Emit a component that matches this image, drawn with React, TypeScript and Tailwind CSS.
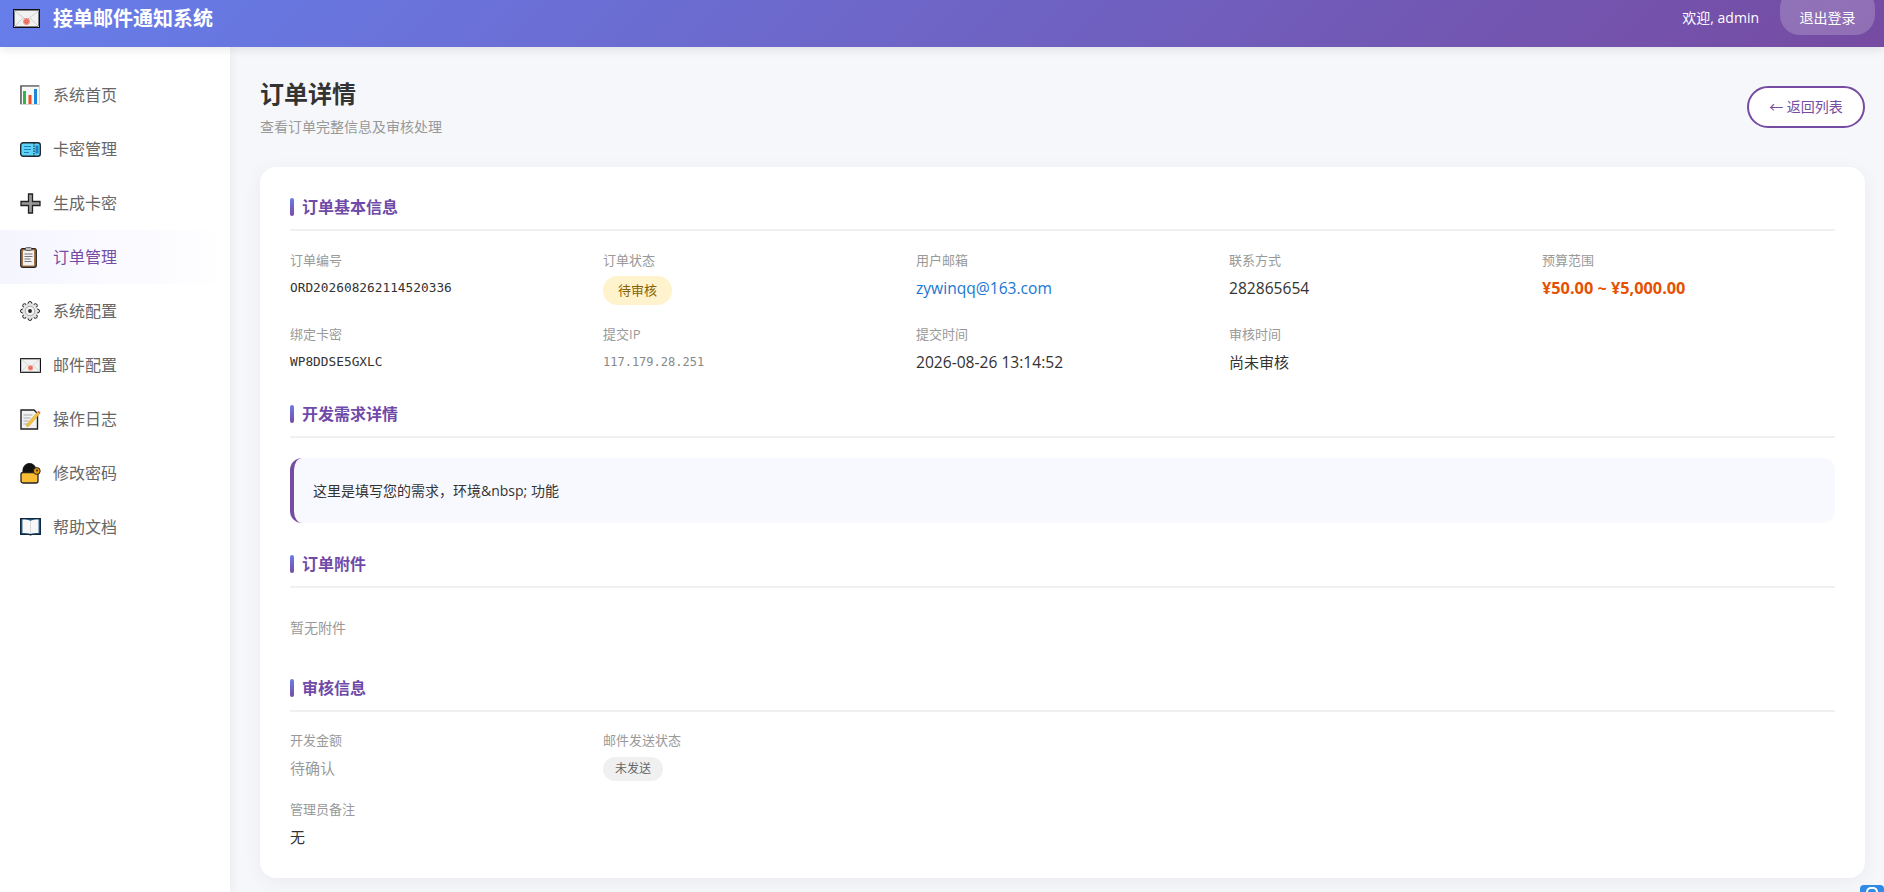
import React from "react";

const Envelope = ({ w, h }: { w: number; h: number }) => (
  <svg width={w} height={h} viewBox="0 0 27 19">
    <rect x="0.75" y="0.75" width="25.5" height="17.5" fill="#f1f1f1" stroke="#111" strokeWidth="1.5" />
    <path d="M1 1.5 13.5 11 26 1.5M1 18l9-9M26 18l-9-9" fill="none" stroke="#cfcfcf" strokeWidth="1" />
    <circle cx="13.5" cy="12.5" r="3.4" fill="#f0907c" />
    <circle cx="13.5" cy="12.5" r="1.5" fill="none" stroke="#d8432c" strokeWidth="0.8" />
  </svg>
);

const Chart = () => (
  <svg width="20" height="20" viewBox="0 0 20 20">
    <rect x="0.5" y="0.5" width="19" height="19" fill="#f8f8f8" stroke="#d5d5d5" />
    <path d="M1 19V1h18" fill="none" stroke="#333" strokeWidth="1.2" />
    <rect x="3" y="6" width="3" height="13" fill="#33b54a" />
    <rect x="8.5" y="10" width="3" height="9" fill="#f04e23" />
    <rect x="14" y="4" width="3" height="15" fill="#1c86dd" />
  </svg>
);

const Ticket = () => (
  <svg width="21" height="15" viewBox="0 0 21 15">
    <rect x="0.7" y="0.7" width="19.6" height="13.6" rx="2.5" fill="#5fd4f7" stroke="#1e2a33" strokeWidth="1.4" />
    <path d="M14 1v13" stroke="#111" strokeWidth="1" strokeDasharray="1.5 1" />
    <path d="M4 4.5h7M4 7.5h7M4 10.5h5" stroke="#1b80c4" strokeWidth="1" />
    <rect x="15.5" y="3.5" width="3" height="8" fill="#1b80c4" />
  </svg>
);

const Plus = () => (
  <svg width="21" height="21" viewBox="0 0 21 21">
    <path d="M8.5 1h4v7.5H20v4h-7.500V20h-4v-7.500H1v-4h7.500z" fill="#9a9a9a" stroke="#222" strokeWidth="1.3" />
  </svg>
);

const Clipboard = () => (
  <svg width="17" height="21" viewBox="0 0 17 21">
    <rect x="0.7" y="1.7" width="15.600" height="18.600" rx="2" fill="#a5754a" stroke="#222" strokeWidth="1.2" />
    <rect x="3" y="3.500" width="11" height="15" fill="#f2f2f2" />
    <rect x="5.500" y="0.500" width="6" height="3" rx="1" fill="#bbb" stroke="#444" strokeWidth="0.7" />
    <path d="M4.500 7h8M4.500 9.500h8M4.500 12h6M4.500 14.500h7" stroke="#777" strokeWidth="1" />
  </svg>
);

const Gear = () => (
  <svg width="20" height="20" viewBox="0 0 20 20">
    <g fill="#e4e4e4" stroke="#222" strokeWidth="1">
      <circle cx="10" cy="2.400" r="1.900" />
      <circle cx="15.400" cy="4.600" r="1.900" />
      <circle cx="17.600" cy="10" r="1.900" />
      <circle cx="15.400" cy="15.400" r="1.900" />
      <circle cx="10" cy="17.600" r="1.900" />
      <circle cx="4.600" cy="15.400" r="1.900" />
      <circle cx="2.400" cy="10" r="1.900" />
      <circle cx="4.600" cy="4.600" r="1.900" />
    </g>
    <circle cx="10" cy="10" r="7.400" fill="#e4e4e4" />
    <circle cx="10" cy="10" r="4.800" fill="#f2f2f2" stroke="#999" strokeWidth="0.800" />
    <circle cx="10" cy="10" r="1.900" fill="#222" />
  </svg>
);

const Memo = () => (
  <svg width="21" height="21" viewBox="0 0 21 21">
    <path d="M1 1h13l3.500 3.500V20H1z" fill="#f2f2f2" stroke="#222" strokeWidth="1.400" />
    <path d="M3.500 6h9M3.500 9h7M3.500 12h5M3.500 15h4" stroke="#aaa" strokeWidth="1" />
    <path d="M7 15 18 2.500l2 1.800L9 17l-2.500.5z" fill="#f4c542" stroke="#d89c20" strokeWidth="0.600" />
    <path d="M17.500 3l1-1.300 2 1.800-1 1.200z" fill="#d66a6a" />
  </svg>
);

const Lock = () => (
  <svg width="21" height="21" viewBox="0 0 21 21">
    <path d="M3 11V7a6.500 6.500 0 0 1 13 0v4z" fill="#111" stroke="#111" strokeWidth="1" />
    <rect x="1" y="9.500" width="17" height="10.500" rx="2" fill="#fbbc35" stroke="#222" strokeWidth="1.300" />
    <circle cx="16.800" cy="8" r="3.400" fill="#e59a0c" stroke="#222" strokeWidth="1" />
    <circle cx="17" cy="7.500" r="0.900" fill="#222" />
  </svg>
);

const Book = () => (
  <svg width="21" height="18" viewBox="0 0 21 18">
    <rect x="0.700" y="0.700" width="19.600" height="15.600" fill="#2b6ea8" stroke="#14263a" strokeWidth="1.400" />
    <path d="M2.500 1.500c3 0 6.500 0 8 1.500 1.500-1.500 5-1.500 8-1.500v13.500c-3 0-6.500 0-8 1-1.500-1-5-1-8-1z" fill="#f7f7f7" />
    <path d="M10.500 3v13" stroke="#cfcfcf" strokeWidth="0.800" />
    <path d="M9.500 16.500h2v1h-2z" fill="#14263a" />
  </svg>
);

const navItems: { label: string; icon: React.ReactNode; active?: boolean }[] = [
  { label: "系统首页", icon: <Chart /> },
  { label: "卡密管理", icon: <Ticket /> },
  { label: "生成卡密", icon: <Plus /> },
  { label: "订单管理", icon: <Clipboard />, active: true },
  { label: "系统配置", icon: <Gear /> },
  { label: "邮件配置", icon: <Envelope w={21} h={15} /> },
  { label: "操作日志", icon: <Memo /> },
  { label: "修改密码", icon: <Lock /> },
  { label: "帮助文档", icon: <Book /> },
];

const SectionTitle = ({ children }: { children: React.ReactNode }) => (
  <div className="flex h-[48px] items-center gap-2 border-b-2 border-[#f0f0f0] pt-[2px] text-[16px] font-bold text-[#6f4aa8]">
    <span className="h-[18px] w-[4px] rounded-[2px] bg-gradient-to-b from-[#667eea] to-[#764ba2]" />
    {children}
  </div>
);

const Field = ({ label, children }: { label: string; children: React.ReactNode }) => (
  <div className="flex h-[62px] flex-col">
    <div className="h-[26px] text-[13px] leading-[26px] text-[#999]">{label}</div>
    <div className="flex h-[30px] items-center text-[15px] leading-[30px] text-[#333]">{children}</div>
  </div>
);

const mono = "font-['DejaVu_Sans_Mono',monospace] text-[12.800px] text-[#333]";

export default function App() {
  return (
    <div className="relative flex h-[892px] flex-col overflow-hidden bg-[#f5f7fa] font-['Open_Sans','Noto_Sans_CJK_SC',sans-serif]">
      <header className="z-20 flex h-[47px] shrink-0 items-start justify-between bg-[linear-gradient(135deg,#667eea,#764ba2)] pl-[13px] pr-[9px] shadow-[0_2px_10px_rgba(0,0,0,0.1)]">
        <div className="flex h-[37px] items-center gap-[13px]">
          <Envelope w={27} h={19} />
          <span className="text-[20px] font-bold leading-[28px] text-white">接单邮件通知系统</span>
        </div>
        <div className="flex items-start gap-[21px]">
          <span className="text-[14px] leading-[36px] text-white">欢迎, admin</span>
          <button className="mt-[-12px] h-[47px] w-[95px] rounded-[20px] bg-white/20 pt-[12px] text-[14px] text-white">
            退出登录
          </button>
        </div>
      </header>
      <div className="flex min-h-0 flex-1">
        <aside className="z-10 w-[230px] shrink-0 bg-white pt-[21px] shadow-[2px_0_10px_rgba(0,0,0,0.05)]">
          {navItems.map((item) => (
            <div
              key={item.label}
              className={
                item.active
                  ? "flex h-[54px] items-center bg-gradient-to-r from-[#f5f5ff] to-white pl-[20px] text-[16px] text-[#764ba2]"
                  : "flex h-[54px] items-center pl-[20px] text-[16px] text-[#666]"
              }
            >
              <span className="flex w-[33px] shrink-0 items-center">{item.icon}</span>
              {item.label}
            </div>
          ))}
        </aside>
        <main className="min-w-0 flex-1 pl-[30px] pr-[19px]">
          <div className="flex h-[120px] items-center justify-between pb-[1px]">
            <div>
              <h1 className="text-[24px] font-bold leading-[34px] text-[#333]">订单详情</h1>
              <p className="mt-[6px] text-[14px] leading-[20px] text-[#999]">查看订单完整信息及审核处理</p>
            </div>
            <button className="h-[42px] w-[118px] rounded-[21px] border-2 border-[#764ba2] bg-white text-[14px] text-[#764ba2]">
              ← 返回列表
            </button>
          </div>
          <section className="h-[711px] rounded-[16px] bg-white px-[30px] pt-[16px] shadow-[0_4px_20px_rgba(0,0,0,0.05)]">
            <SectionTitle>订单基本信息</SectionTitle>
            <div className="grid grid-cols-5 gap-x-[20px] gap-y-[12px] pt-[16px]">
              <Field label="订单编号"><span className={mono}>ORD202608262114520336</span></Field>
              <Field label="订单状态">
                <span className="mt-[5px] rounded-[15px] bg-[#fff3cd] px-[15px] text-[13px] leading-[29px] text-[#856404]">待审核</span>
              </Field>
              <Field label="用户邮箱"><span className="text-[15.600px] text-[#1976d2]">zywinqq@163.com</span></Field>
              <Field label="联系方式"><span className="text-[15.600px]">282865654</span></Field>
              <Field label="预算范围"><span className="text-[16.300px] font-bold text-[#e65100]">¥50.00 ~ ¥5,000.00</span></Field>
              <Field label="绑定卡密"><span className={mono}>WP8DDSE5GXLC</span></Field>
              <Field label="提交IP"><span className="font-['DejaVu_Sans_Mono',monospace] text-[12px] text-[#888]">117.179.28.251</span></Field>
              <Field label="提交时间"><span className="text-[15.600px]">2026-08-26 13:14:52</span></Field>
              <Field label="审核时间">尚未审核</Field>
            </div>
            <div className="pt-[7px]">
              <SectionTitle>开发需求详情</SectionTitle>
            </div>
            <div className="mt-[20px] flex h-[65px] items-center rounded-[12px] border-l-4 border-[#764ba2] bg-[#f8f9ff] pl-[19px] text-[14px] text-[#333]">
              这里是填写您的需求，环境&amp;nbsp; 功能
            </div>
            <div className="pt-[17px]">
              <SectionTitle>订单附件</SectionTitle>
            </div>
            <div className="flex h-[76px] items-center pt-[3px] text-[14px] text-[#999]">暂无附件</div>
            <SectionTitle>审核信息</SectionTitle>
            <div className="grid grid-cols-5 gap-x-[20px] pt-[15px]">
              <Field label="开发金额"><span className="text-[#999]">待确认</span></Field>
              <Field label="邮件发送状态">
                <span className="mt-[2px] rounded-[12px] bg-[#f0f0f0] px-[12px] text-[12px] leading-[24px] text-[#666]">未发送</span>
              </Field>
              <div className="col-span-5 pt-[7px]">
                <Field label="管理员备注">无</Field>
              </div>
            </div>
          </section>
        </main>
      </div>
      <div className="absolute bottom-0 right-0 flex h-[7px] w-[24px] items-start justify-center rounded-t-[4px] bg-[#2f8be6]">
        <span className="mt-[2px] h-[5px] w-[12px] rounded-t-full border-2 border-b-0 border-white" />
      </div>
    </div>
  );
}
